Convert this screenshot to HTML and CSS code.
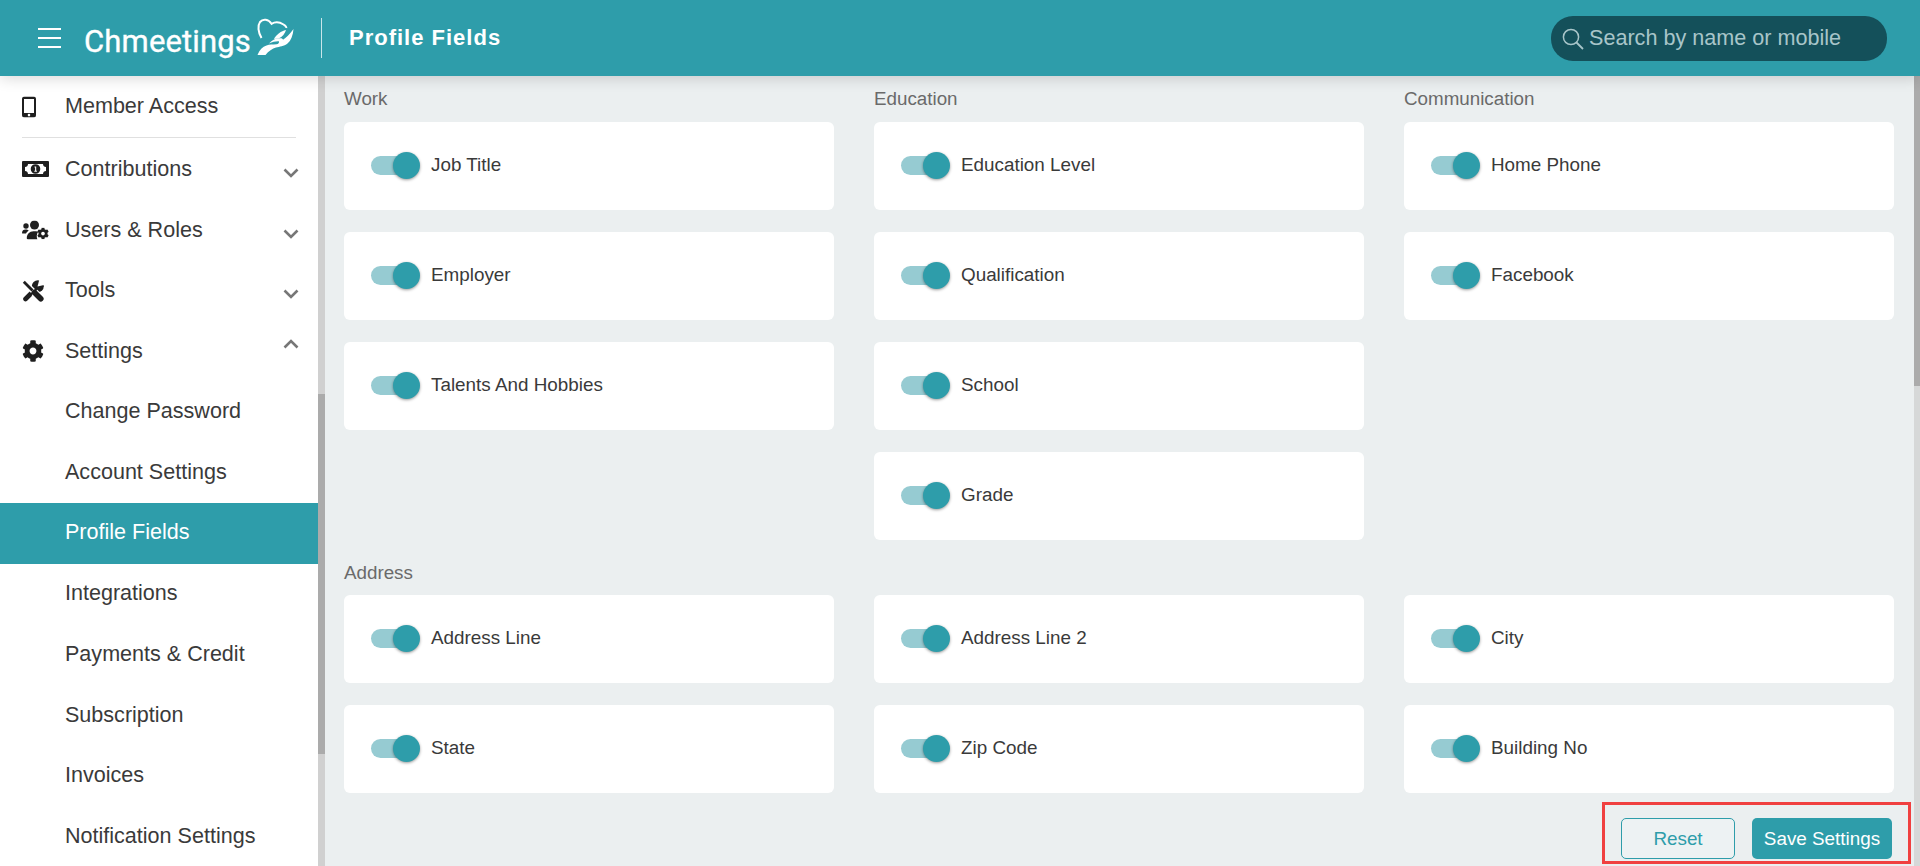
FILE: index.html
```html
<!DOCTYPE html>
<html lang="en">
<head>
<meta charset="utf-8">
<title>Profile Fields</title>
<link rel="stylesheet" href="styles.css">
</head>
<body>
<svg class="defs" width="0" height="0" aria-hidden="true">
  <symbol id="cog" viewBox="0 0 512 512"><path d="M487.4 315.7l-42.6-24.6c4.3-23.2 4.3-47 0-70.2l42.6-24.6c4.9-2.8 7.1-8.6 5.5-14-11.1-35.6-30-67.8-54.7-94.6-3.8-4.1-10-5.1-14.8-2.3L380.8 110c-17.9-15.4-38.5-27.3-60.8-35.1V25.8c0-5.6-3.9-10.5-9.4-11.7-36.7-8.2-74.3-7.8-109.2 0-5.5 1.2-9.4 6.1-9.4 11.7V75c-22.2 7.9-42.8 19.8-60.8 35.1L88.7 85.5c-4.9-2.8-11-1.9-14.8 2.3-24.7 26.7-43.6 58.9-54.7 94.6-1.7 5.4.6 11.2 5.5 14L67.3 221c-4.3 23.2-4.3 47 0 70.2l-42.6 24.6c-4.9 2.8-7.1 8.6-5.5 14 11.1 35.6 30 67.8 54.7 94.6 3.8 4.1 10 5.1 14.8 2.3l42.6-24.6c17.9 15.4 38.5 27.3 60.8 35.1v49.2c0 5.6 3.9 10.5 9.4 11.7 36.7 8.2 74.3 7.8 109.2 0 5.5-1.2 9.4-6.1 9.4-11.7v-49.2c22.2-7.9 42.8-19.8 60.8-35.1l42.6 24.6c4.9 2.8 11 1.9 14.8-2.3 24.7-26.7 43.6-58.9 54.7-94.6 1.5-5.5-.7-11.3-5.6-14.1zM256 336c-44.1 0-80-35.9-80-80s35.9-80 80-80 80 35.9 80 80-35.9 80-80 80z"/></symbol>
  <symbol id="chev-down" viewBox="0 0 16 10"><path d="M1.500 1.500 8 8l6.500-6.500" fill="none" stroke="currentColor" stroke-width="2.600"/></symbol>
  <symbol id="chev-up" viewBox="0 0 16 10"><path d="M1.500 8.500 8 2l6.500 6.500" fill="none" stroke="currentColor" stroke-width="2.600"/></symbol>
</svg>

<header class="topbar">
  <button class="burger" aria-label="Menu"><span></span><span></span><span></span></button>
  <div class="logo">
    <span class="logo-text">Chmeetings</span>
    <svg class="logo-mark" viewBox="0 0 38 38" aria-hidden="true">
      <path d="M5.500 20C2 14 1.500 7.500 4 4c3-3.500 8.500-2.800 11.500 1.800C19 3.800 24 4.300 27.500 6.500c2 1.200 3 2.500 2.800 3.500" fill="none" stroke="#fff" stroke-width="2"/>
      <path d="M37.500 11c-.5 6.500-2.500 11.500-6 14.500-3.500 3-8 3-11.500 4-3.500 1-7.500 3.500-10.500 7.500H1.500c2-5.200 5-8.300 9-9.500 3-1 6.500-1 10-1.200 1.800-.1 3-1.600 2.400-3-3-.2-6.300.6-9.900 2.200 3-3.600 7-5.300 11.500-5.200 1.500 0 2.200.6 2.500 1.400 3-2 6.500-5.200 10.500-10.700z" fill="#fff"/>
      <path d="M18 21c2.500-4.500 7-8 12-9-1 3.500-3.500 7-7.500 8.500z" fill="#fff"/>
    </svg>
  </div>
  <h1 class="page-title">Profile Fields</h1>
  <label class="search">
    <svg class="search-icon" viewBox="0 0 22 22" aria-hidden="true"><circle cx="9" cy="9" r="7.600" fill="none" stroke="currentColor" stroke-width="1.500"/><path d="M14.500 14.500 21 21" fill="none" stroke="currentColor" stroke-width="1.800"/></svg>
    <span>Search by name or mobile</span>
  </label>
</header>

<div class="main">
  <aside class="sidebar">
    <nav class="nav">
      <a class="nav-item nav-first">
        <svg class="nav-icon icon-phone" viewBox="0 0 14 21"><path fill-rule="evenodd" d="M2.500 0h9A2.500 2.500 0 0 1 14 2.500v16a2.500 2.500 0 0 1-2.500 2.500h-9A2.500 2.500 0 0 1 0 18.500v-16A2.500 2.500 0 0 1 2.500 0zM2 2.500V16.500h10V2.500zM7 17.300a1.300 1.300 0 1 0 0 2.600 1.300 1.300 0 0 0 0-2.600z"/></svg>
        <span>Member Access</span>
      </a>
      <hr class="nav-rule">
      <a class="nav-item nav-parent">
        <svg class="nav-icon icon-money" viewBox="0 0 27 16"><path fill-rule="evenodd" d="M1 0h25a1 1 0 0 1 1 1v14a1 1 0 0 1-1 1H1a1 1 0 0 1-1-1V1a1 1 0 0 1 1-1zM6 3c0 1.700-1.300 3-3 3v4c1.700 0 3 1.300 3 3h15c0-1.700 1.300-3 3-3V6c-1.700 0-3-1.300-3-3zM13.500 3.200a4.800 4.800 0 1 1 0 9.600 4.800 4.800 0 0 1 0-9.600zM12.500 5.400v1.100h.6v3.300h-.8v1h2.600v-1h-.7V5.400z"/></svg>
        <span>Contributions</span>
        <svg class="chev"><use href="#chev-down"/></svg>
      </a>
      <a class="nav-item nav-parent">
        <svg class="nav-icon icon-users" viewBox="0 0 27 19">
          <circle cx="4" cy="5.500" r="2.700"/><path d="M0 12.500C0 10 1.500 9 3.500 9c1.500 0 2.500.4 3.300 1.300C5.500 11 4.500 12 4 13H1c-.6 0-1-.1-1-.5z"/>
          <circle cx="12.500" cy="4.500" r="4.500"/><path d="M6 19c-.8 0-1.200-.5-1.200-1.200 0-4 2.700-7 6.700-7h2.500c1 0 1.500.2 2.200.5-1.700 2-1.800 5.200-.8 7.700z"/>
          <use href="#cog" x="15" y="7" width="12" height="12"/>
        </svg>
        <span>Users &amp; Roles</span>
        <svg class="chev"><use href="#chev-down"/></svg>
      </a>
      <a class="nav-item">
        <svg class="nav-icon icon-square" viewBox="0 0 22 22">
          <path d="M3.500 19 13 9.500" fill="none" stroke="#1f1f1f" stroke-width="4.600" stroke-linecap="round"/>
          <circle cx="15.800" cy="6.200" r="6"/>
          <path d="M15.500 6.500 17.500-1H24v5.500z" fill="#fff"/>
          <path d="M1.500 1.500 11 11" fill="none" stroke="#fff" stroke-width="5.500"/>
          <path d="M1.800 1.800 10.500 10.500" fill="none" stroke="#1f1f1f" stroke-width="2.800"/>
          <path d="M12.500 12.500 18.800 18.800" fill="none" stroke="#fff" stroke-width="8"/>
          <path d="M12.500 12.500 18.800 18.800" fill="none" stroke="#1f1f1f" stroke-width="5.600" stroke-linecap="round"/>
        </svg>
        <span>Tools</span>
        <svg class="chev"><use href="#chev-down"/></svg>
      </a>
      <a class="nav-item nav-parent">
        <svg class="nav-icon icon-square"><use href="#cog"/></svg>
        <span>Settings</span>
        <svg class="chev chev-open"><use href="#chev-up"/></svg>
      </a>
      <a class="nav-item">Change Password</a>
      <a class="nav-item">Account Settings</a>
      <a class="nav-item is-active">Profile Fields</a>
      <a class="nav-item">Integrations</a>
      <a class="nav-item">Payments &amp; Credit</a>
      <a class="nav-item">Subscription</a>
      <a class="nav-item">Invoices</a>
      <a class="nav-item">Notification Settings</a>
    </nav>
    <div class="scroll-track"><div class="scroll-thumb side-thumb"></div></div>
  </aside>

  <main class="content">
    <div class="fields">
      <div class="columns">
        <section class="group">
          <h2 class="group-title">Work</h2>
          <div class="field"><i class="toggle"></i>Job Title</div>
          <div class="field"><i class="toggle"></i>Employer</div>
          <div class="field"><i class="toggle"></i>Talents And Hobbies</div>
        </section>
        <section class="group">
          <h2 class="group-title">Education</h2>
          <div class="field"><i class="toggle"></i>Education Level</div>
          <div class="field"><i class="toggle"></i>Qualification</div>
          <div class="field"><i class="toggle"></i>School</div>
          <div class="field"><i class="toggle"></i>Grade</div>
        </section>
        <section class="group">
          <h2 class="group-title">Communication</h2>
          <div class="field"><i class="toggle"></i>Home Phone</div>
          <div class="field"><i class="toggle"></i>Facebook</div>
        </section>
      </div>
      <section class="address">
        <h2 class="group-title group-title-tight">Address</h2>
        <div class="address-grid">
          <div class="field"><i class="toggle"></i>Address Line</div>
          <div class="field"><i class="toggle"></i>Address Line 2</div>
          <div class="field"><i class="toggle"></i>City</div>
          <div class="field"><i class="toggle"></i>State</div>
          <div class="field"><i class="toggle"></i>Zip Code</div>
          <div class="field"><i class="toggle"></i>Building No</div>
        </div>
      </section>
    </div>
    <div class="actions">
      <button class="btn btn-ghost">Reset</button>
      <button class="btn btn-solid">Save Settings</button>
    </div>
  </main>

  <div class="scroll-track page-track"><div class="scroll-thumb page-thumb"></div></div>
</div>
</body>
</html>
```

FILE: styles.css
```css
* { box-sizing: border-box; }

html, body {
  margin: 0;
  height: 866px;
  overflow: hidden;
}

body {
  font-family: "Liberation Sans", Arial, sans-serif;
  color: #333;
  background: #ebeff0;
}

.defs { position: absolute; }

/* Top bar */
.topbar {
  position: relative;
  z-index: 2;
  display: flex;
  align-items: center;
  height: 76px;
  padding-left: 38px;
  background: #2e9daa;
  color: #fff;
  box-shadow: 0 2px 14px rgba(0, 0, 0, 0.16);
}

.burger {
  display: flex;
  flex-direction: column;
  justify-content: space-between;
  width: 23px;
  height: 20px;
  padding: 0;
  border: 0;
  background: none;
}

.burger span {
  display: block;
  height: 2px;
  background: #fff;
}

.logo {
  display: flex;
  align-items: center;
  flex: none;
  width: 238px;
  height: 40px;
  margin-left: 23px;
  border-right: 1px solid rgba(255, 255, 255, 0.75);
}

.logo-text {
  font-family: Roboto, sans-serif;
  font-size: 31px;
  font-weight: 400;
  line-height: 1;
  letter-spacing: 0.15px;
  margin-top: 7px;
  -webkit-text-stroke: 0.35px #fff;
}

.logo-mark {
  flex: none;
  width: 38px;
  height: 38px;
  margin-left: 5px;
  margin-top: -3px;
}

.page-title {
  margin: 0 0 0 27px;
  font-size: 22px;
  font-weight: 700;
  letter-spacing: 1px;
  line-height: 40px;
}

.search {
  display: flex;
  align-items: center;
  gap: 5px;
  width: 336px;
  height: 45px;
  margin-left: auto;
  margin-right: 33px;
  padding-left: 11px;
  border-radius: 22px;
  background: #14505a;
  color: #a8c5c9;
  font-size: 21.6px;
}

.search-icon {
  flex: none;
  width: 22px;
  height: 22px;
  margin-top: 2px;
}

/* Layout */
.main {
  display: flex;
  height: 790px;
}

.sidebar {
  display: flex;
  flex: none;
  width: 325px;
  background: #fff;
}

.nav {
  flex: none;
  width: 318px;
  overflow: hidden;
}

.nav-item {
  position: relative;
  display: flex;
  align-items: center;
  height: 60.7px;
  padding: 0 0 2px 65px;
  font-size: 21.55px;
  color: #3a3a3a;
}

.nav-first { height: 61px; padding-bottom: 1px; }
.nav-parent { padding-bottom: 0; }

.nav-icon {
  position: absolute;
  left: 22px;
  top: 50%;
  transform: translateY(-50%);
  fill: #1f1f1f;
}

.icon-phone { width: 14px; height: 21px; }
.icon-money { width: 27px; height: 16px; }
.icon-users { width: 27px; height: 19px; }
.icon-square { width: 22px; height: 22px; }

.nav-rule {
  height: 1px;
  margin: 0 22px 1px;
  border: 0;
  background: #e0e0e0;
}

.chev {
  position: absolute;
  right: 19px;
  top: 29px;
  width: 16px;
  height: 10px;
  color: #777;
}

.chev-open { top: 18px; }

.is-active {
  background: #2e9daa;
  color: #fff;
}

.scroll-track {
  flex: none;
  width: 7px;
  height: 100%;
  background: #d0d0d0;
}

.scroll-thumb { background: #ababab; }

.side-thumb {
  height: 360px;
  margin-top: 318px;
}

.page-track {
  width: 6px;
  background: #d6d8d8;
}

.page-thumb { height: 310px; }

/* Content */
.content {
  flex: 1;
  min-width: 0;
  padding: 12px 3px 0 19px;
  background: #ebeff0;
}

.fields { margin-right: 17px; }

.columns,
.address-grid {
  display: grid;
  grid-template-columns: repeat(3, 490px);
  column-gap: 40px;
}

.group-title {
  margin: 0 0 12px;
  font-size: 18.8px;
  font-weight: 400;
  line-height: 22px;
  color: #6a6a6a;
}

.group-title-tight { margin-bottom: 11px; }

.field {
  display: flex;
  align-items: center;
  gap: 11px;
  height: 88px;
  margin-bottom: 22px;
  padding: 0 0 3px 27px;
  border-radius: 6px;
  background: #fff;
  font-size: 18.85px;
  color: #3a3a3a;
}

.toggle {
  position: relative;
  flex: none;
  width: 49px;
  height: 27px;
  margin-top: 2px;
}

.toggle::before {
  content: "";
  position: absolute;
  left: 0;
  top: 4px;
  width: 42px;
  height: 19px;
  border-radius: 10px;
  background: #96cbd2;
}

.toggle::after {
  content: "";
  position: absolute;
  right: 0;
  top: 0;
  width: 27px;
  height: 27px;
  border-radius: 50%;
  background: #2e9daa;
  box-shadow: 0 1px 3px rgba(0, 0, 0, 0.4);
}

.actions {
  display: flex;
  justify-content: flex-end;
  gap: 17px;
  width: 309px;
  height: 62px;
  margin-left: auto;
  margin-top: -13px;
  padding: 13px 16px 0;
  border: 3px solid #f04040;
}

.btn {
  height: 41px;
  padding: 0;
  border-radius: 5px;
  font-family: inherit;
  font-size: 18.85px;
}

.btn-ghost {
  width: 114px;
  border: 1px solid #2e9daa;
  background: #edf2f3;
  color: #2e9daa;
}

.btn-solid {
  width: 140px;
  border: 0;
  background: #2e9daa;
  color: #fff;
}
```
